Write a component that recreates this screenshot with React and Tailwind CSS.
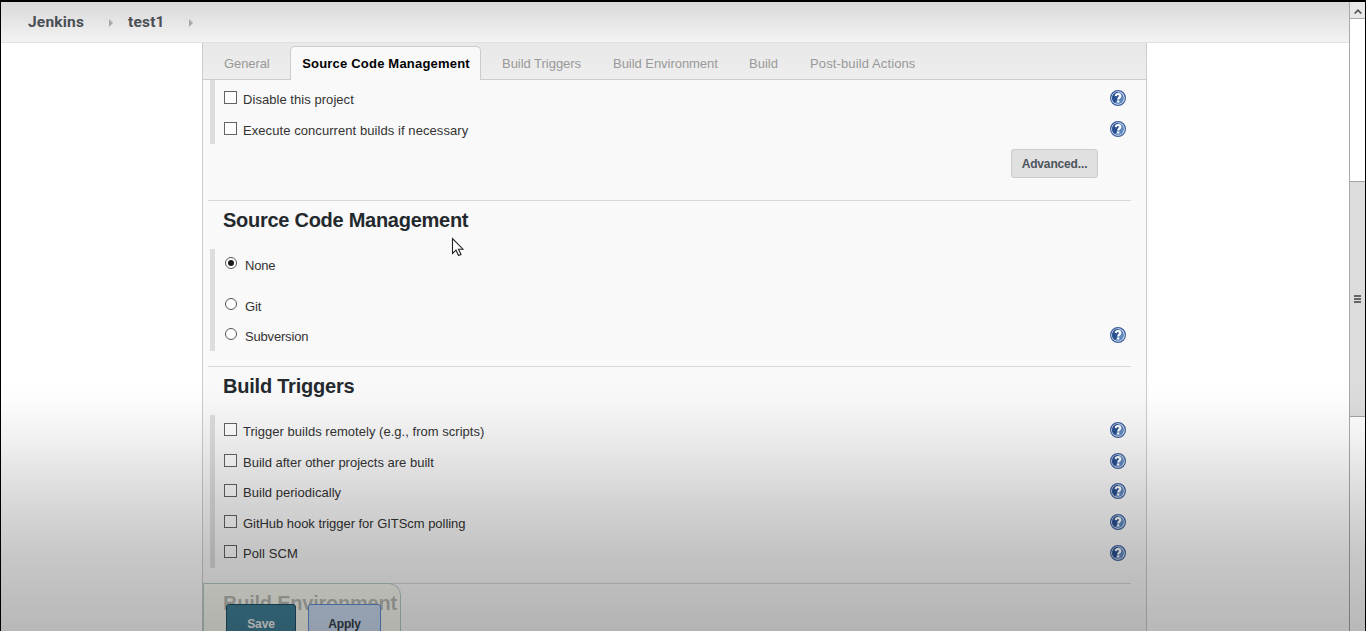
import React from "react";

const TABS_AFTER = [
  { label: "Build Triggers", cls: "w-[111px] tracking-[-0.03px]" },
  { label: "Build Environment", cls: "w-[136px] tracking-[-0.04px]" },
  { label: "Build", cls: "w-[61px]" },
  { label: "Post-build Actions", cls: "w-[120px] tracking-[0.12px]" },
];

function Help() {
  return (
    <svg viewBox="0 0 16 16" className="block h-4 w-4 shrink-0">
      <circle cx="8" cy="8" r="7.4" fill="#dfe8f4" stroke="#3c5f9c" strokeWidth="1.2" />
      <circle cx="8" cy="8" r="5.9" fill="#5f88bf" />
      <path d="M8 2.1A5.9 5.9 0 0 0 5 13.1Q9 9 8 2.1Z" fill="#2a5090" />
      <path d="M5.7 6.1C5.8 3.3 10.5 3.5 10.3 6.1C10.2 7.7 8.2 7.6 8.2 9.4" fill="none" stroke="#fff" strokeWidth="2" />
      <rect x="7.1" y="10.5" width="2.2" height="2" fill="#fff" />
    </svg>
  );
}

function Check({ label, height, track, helpCls = "mt-[-1px]" }) {
  return (
    <div className={`flex items-start ${height}`}>
      <span className="h-[13px] w-[13px] shrink-0 border border-[#636363] bg-white" />
      <span className={`ml-[6px] grow whitespace-nowrap leading-[18px] ${track}`}>{label}</span>
      <div className={helpCls}><Help /></div>
    </div>
  );
}

function Radio({ label, checked, help, height }) {
  return (
    <div className={`flex items-start ${height}`}>
      <span className="ml-px flex h-3 w-3 shrink-0 items-center justify-center rounded-full border border-[#555] bg-white">
        {checked && <span className="h-[6px] w-[6px] rounded-full bg-[#1a1a1a]" />}
      </span>
      <span className="ml-2 grow whitespace-nowrap leading-[18px] tracking-[-0.18px]">{label}</span>
      {help && <div className="mt-[-1px]"><Help /></div>}
    </div>
  );
}

function Arrow() {
  return (
    <svg viewBox="0 0 4 8" className="h-2 w-1">
      <path d="M0 0L4 4L0 8Z" fill="#a8a8a8" />
    </svg>
  );
}

export default function App() {
  return (
    <div className="relative flex h-[631px] w-[1366px] flex-col overflow-hidden border-x border-t-2 border-black bg-white font-['Liberation_Sans',Arial,sans-serif] text-[13px] text-[#333]">
      <div className="flex min-h-0 grow">
        <div className="flex w-[1348px] flex-col">
          <header className="flex h-[41px] shrink-0 items-center border-b border-[#e1e1e1] bg-linear-to-b from-[#d9d9d9] to-[#f3f3f3] pl-[27px] pt-px font-[Roboto,sans-serif] text-[15.5px] font-bold text-[#4a4f55]">
            <span className="w-[81px] pt-px tracking-[0.2px]">Jenkins</span>
            <Arrow />
            <span className="ml-[15px] w-[61px] pt-px tracking-[0.2px]">test1</span>
            <Arrow />
          </header>
          <main className="ml-[201px] flex h-[588px] w-[945px] flex-col border-x border-[#ccc] bg-[#f9f9f9]">
            <nav className="flex h-[37px] shrink-0 items-end bg-linear-to-b from-[#e8e8e8] to-[#eee] text-[#999]">
              <div className="flex h-full w-[87px] items-center border-b border-[#ccc] pl-[21px] pt-[5px] tracking-[-0.1px]">General</div>
              <div className="flex h-[34px] w-[191px] items-center justify-center rounded-t-[5px] border border-b-0 border-[#ccc] bg-[#f9f9f9] pl-px font-bold tracking-[0.2px] text-black">
                Source Code Management
              </div>
              <div className="flex h-full grow items-center border-b border-[#ccc] pl-[21px] pt-[5px]">
                {TABS_AFTER.map((t) => (
                  <span key={t.label} className={`shrink-0 whitespace-nowrap ${t.cls}`}>{t.label}</span>
                ))}
              </div>
            </nav>

            <section className="h-[120px] shrink-0 pl-[7px]">
              <div className="h-[64px] w-[916px] border-l-[5px] border-[#ddd] pl-[9px] pt-[11px]">
                <Check label="Disable this project" height="h-[31px]" track="tracking-[0.05px]" />
                <Check label="Execute concurrent builds if necessary" height="h-[20px]" track="tracking-[0.07px]" />
              </div>
              <button className="ml-[801px] mt-[5px] block h-[29px] w-[87px] rounded-[3px] border border-[#ccc] bg-[#e0e0e0] text-[12px] font-bold tracking-[-0.15px] text-[#4d545d]">Advanced...</button>
            </section>

            <section className="ml-[5px] h-[166px] w-[923px] shrink-0 border-t border-[#d8d8d8] pl-[2px]">
              <h2 className="ml-[13px] mt-[6px] h-[42px] text-[20px] font-bold leading-[26px] tracking-[-0.27px] text-[#24292e]">Source Code Management</h2>
              <div className="h-[102px] w-[916px] border-l-[5px] border-[#ddd] pl-[9px] pt-[8px]">
                <Radio label="None" checked height="h-[41px]" />
                <Radio label="Git" height="h-[30px]" />
                <Radio label="Subversion" help height="h-[20px]" />
              </div>
            </section>

            <section className="ml-[5px] h-[217px] w-[923px] shrink-0 border-t border-[#d8d8d8] pl-[2px]">
              <h2 className="ml-[13px] mt-[6px] h-[42px] text-[20px] font-bold leading-[26px] tracking-[-0.22px] text-[#24292e]">Build Triggers</h2>
              <div className="h-[153px] w-[916px] border-l-[5px] border-[#ddd] pl-[9px] pt-[8px]">
                <Check label="Trigger builds remotely (e.g., from scripts)" height="h-[31px]" track="tracking-[0.03px]" />
                <Check label="Build after other projects are built" height="h-[30px]" track="tracking-[0px]" />
                <Check label="Build periodically" height="h-[31px]" track="tracking-[0.03px]" />
                <Check label="GitHub hook trigger for GITScm polling" height="h-[30px]" track="tracking-[-0.04px]" />
                <Check label="Poll SCM" height="h-[20px]" track="tracking-[0.1px]" helpCls="mt-0" />
              </div>
            </section>

            <section className="ml-[5px] h-[48px] w-[923px] shrink-0 border-t border-[#d8d8d8] pl-[15px]">
              <h2 className="mt-[6px] text-[20px] font-bold leading-[26px] tracking-[-0.23px] text-[#24292e]">Build Environment</h2>
            </section>
          </main>
        </div>

        <aside className="flex w-4 shrink-0 flex-col border-l border-[#a9a9a9] bg-white">
          <div className="flex h-[17px] items-center justify-center border-b border-[#aaa] bg-[#e8e8e8] pt-[3px]">
            <svg viewBox="0 0 8 5" className="h-[5px] w-2"><path d="M.7 4.5L4 1.2L7.3 4.5" fill="none" stroke="#555" strokeWidth="1.7" /></svg>
          </div>
          <div className="mt-[162px] flex h-[236px] flex-col items-center justify-center gap-px border-y border-[#a3a3a3] bg-[#dcdcdc]">
            <span className="h-[2px] w-[7px] bg-[#666]" />
            <span className="h-[2px] w-[7px] bg-[#666]" />
            <span className="h-[2px] w-[7px] bg-[#666]" />
          </div>
        </aside>
      </div>

      {/* sticky save bar */}
      <div className="absolute left-[202px] top-[581px] flex h-[60px] w-[198px] gap-[12px] rounded-tr-[12px] border border-[#b4cabd] bg-[#f6f7ec]/70 pl-[22px] pt-[20px]">
        <div className="h-[40px] w-[70px] rounded-[3px] border border-[#1e4f62] bg-[#3f7f97] pt-[12px] text-center text-[12px] font-bold leading-[15px] tracking-[-0.1px] text-[#eee]">Save</div>
        <div className="h-[40px] w-[73px] rounded-[3px] border border-[#5c90d2] bg-[#cadaf0] pt-[12px] text-center text-[12px] font-bold leading-[15px] tracking-[-0.2px] text-[#333c48]">Apply</div>
      </div>

      {/* pointer */}
      <svg viewBox="0 0 13 20" className="absolute left-[450px] top-[235px] h-5 w-[13px]">
        <path d="M1.5 1.5V16.5L5 13.2L7.6 18.6L10 17.4L7.5 12.2H12Z" fill="#fff" stroke="#222" strokeWidth="1.1" />
      </svg>

      {/* bottom shade */}
      <div className="pointer-events-none absolute inset-x-0 bottom-0 h-[251px] bg-[linear-gradient(to_bottom,rgba(0,0,0,0)_0%,rgba(0,0,0,0.012)_8%,rgba(0,0,0,0.06)_24%,rgba(0,0,0,0.15)_48%,rgba(0,0,0,0.22)_70%,rgba(0,0,0,0.28)_100%)]" />
    </div>
  );
}
